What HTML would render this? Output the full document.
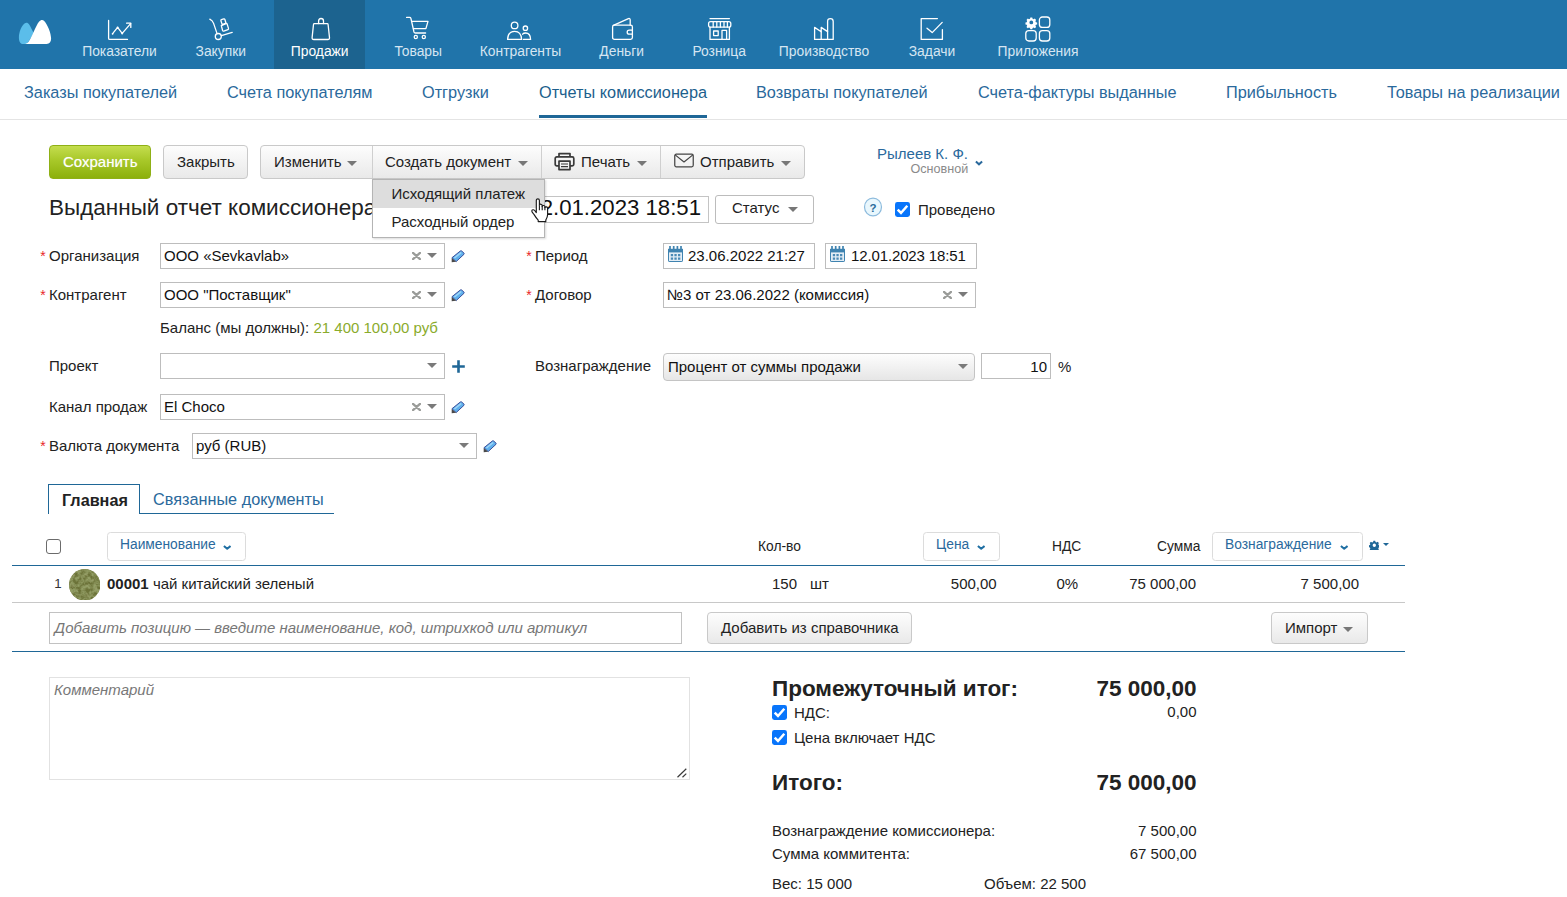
<!DOCTYPE html>
<html lang="ru">
<head>
<meta charset="utf-8">
<title>Выданный отчет комиссионера</title>
<style>
*{box-sizing:border-box;margin:0;padding:0}
html,body{width:1567px;height:897px;overflow:hidden;background:#fff}
body{font-family:"Liberation Sans",sans-serif;font-size:15px;color:#222;position:relative}
.abs{position:absolute;white-space:nowrap}
/* top nav */
#topnav{position:absolute;left:0;top:0;width:1567px;height:69px;background:#2074aa}
#topnav .active{position:absolute;left:274px;top:0;width:91px;height:69px;background:#1c638f}
.navlbl{position:absolute;top:42px;font-size:13.85px;line-height:18px;color:#d6e6f2;text-align:center;width:140px;margin-left:-70px;white-space:nowrap}
.navlbl.on{color:#fff}
.navico{position:absolute;top:14px;width:28px;height:28px;margin-left:-14px}
/* subnav */
#subnav{position:absolute;left:0;top:69px;width:1567px;height:51px;border-bottom:1px solid #e4e4e4;background:#fff}
.sub{position:absolute;top:13px;font-size:16.3px;line-height:20px;color:#2a699c;white-space:nowrap}
.sub.on{color:#1c5f8d}
#subul{position:absolute;left:539px;top:46px;width:168px;height:3px;background:#1f6797}
/* buttons */
.btn{position:absolute;height:34px;border:1px solid #c9c9c9;border-radius:4px;background:linear-gradient(#fdfdfd,#e9e9e9);font-size:15px;line-height:32px;color:#222;text-align:left;white-space:nowrap}
.caret{display:inline-block;width:0;height:0;border-left:5px solid transparent;border-right:5px solid transparent;border-top:5px solid #666;vertical-align:middle;margin-left:6px}
.lbl{position:absolute;font-size:15px;line-height:18px;color:#222;white-space:nowrap}
.req:before{content:"*";color:#e8262a;position:absolute;left:-8.8px;top:-0.5px;font-size:14px}
.inp{position:absolute;height:26px;border:1px solid #bdbdbd;background:#fff;font-size:15px;line-height:24px;padding-left:3px;color:#111;white-space:nowrap;overflow:hidden}
.x{position:absolute;top:0;font-size:15px;color:#888;font-weight:bold}
.tb{font-size:15px;line-height:18px;color:#222}
.vsep{top:146px;width:1px;height:32px;background:#cfcfcf}
.hbtn{position:absolute;height:29px;border:1px solid #dcdcdc;border-radius:3.5px;background:#fff}
.th{font-size:13.8px;line-height:17px;color:#222}
.th.blue{color:#2a699c}
.td{font-size:15px;line-height:18px;color:#222}
.r{text-align:right}
.big{font-size:22.5px;line-height:26px;font-weight:bold;color:#222}
.dd{position:absolute;width:0;height:0;border-left:5.5px solid transparent;border-right:5.5px solid transparent;border-top:5.5px solid #777;margin-top:1px}
</style>
</head>
<body>
<div id="topnav">
  <div class="active"></div>

  <svg class="abs" style="left:18px;top:19px" width="34" height="26" viewBox="0 0 34 26">
    <path d="M4.3 25 C1.8 24.5 0.9 21.5 0.9 18.5 C0.9 13 3.8 6.5 6.5 4.6 C8.2 3.3 9.8 3.6 11.2 5.5 C12.6 7.5 14 11 15.8 14 L9 25 Z" fill="#5bbdea"/>
    <path d="M7.2 25 C10.5 24.5 12.2 20.5 15.4 13.6 C17.5 9 19.5 4.5 21.2 2.6 C22.6 0.9 24.6 0.2 26.2 2 C29.5 5.6 33.1 14 33.1 19.6 C33.1 23 31.5 25 28.6 25 Z" fill="#fff"/>
  </svg>
  <!-- Показатели -->
  <svg class="abs" style="left:106px;top:18px" width="28" height="24" viewBox="0 0 28 24" fill="none" stroke="#fff" stroke-width="1.3" stroke-linecap="round" stroke-linejoin="round">
    <path d="M2.6 2.4 V20.2 Q2.6 21.4 3.8 21.4 H21.5"/>
    <path d="M6.6 15.6 L11.6 9.4 L16.2 15.4 L24.6 5.6"/>
    <path d="M20.6 5.2 L24.8 5.2 L24.8 9.4"/>
    <circle cx="6.6" cy="15.8" r="0.9" fill="#fff" stroke="none"/>
    <circle cx="16.2" cy="15.4" r="1" fill="#fff" stroke="none"/><circle cx="11.6" cy="9.6" r="1" fill="#fff" stroke="none"/>
  </svg>
  <div class="navlbl" style="left:119.5px">Показатели</div>
  <!-- Закупки -->
  <svg class="abs" style="left:208px;top:17px" width="26" height="25" viewBox="0 0 26 25" fill="none" stroke="#fff" stroke-width="1.3" stroke-linecap="round" stroke-linejoin="round">
    <path d="M1.8 2.2 Q4.6 3.6 5.6 6.4 L9 16.4"/>
    <circle cx="10.3" cy="19.5" r="3"/>
    <path d="M13.4 18.6 L24.2 15.4"/>
    <path d="M12.9 3.8 Q12.6 3 13.4 2.7 L15.8 1.9 Q16.6 1.7 16.9 2.5 L18 6.2 L14.2 7.6 Z"/>
    <path d="M13.3 8.7 L18 6.6 Q18.9 6.3 19.2 7.2 L20.5 11.4 Q20.8 12.3 19.9 12.6 L15.8 14.1 Q14.9 14.4 14.6 13.5 Z"/>
  </svg>
  <div class="navlbl" style="left:220.8px">Закупки</div>
  <!-- Продажи -->
  <svg class="abs" style="left:309px;top:16px" width="24" height="26" viewBox="0 0 24 26" fill="none" stroke="#fff" stroke-width="1.3" stroke-linecap="round" stroke-linejoin="round">
    <path d="M5.4 7.7 H18.2 Q19 7.7 19.1 8.5 L20.5 21.6 Q20.7 23.5 18.8 23.5 H4.8 Q2.9 23.5 3.1 21.6 L4.5 8.5 Q4.6 7.7 5.4 7.7Z"/>
    <path d="M9.6 7.5 V4.9 Q9.6 2.5 12 2.5 Q14.5 2.5 14.5 4.9 V7.5"/>
  </svg>
  <div class="navlbl on" style="left:319.7px">Продажи</div>
  <!-- Товары -->
  <svg class="abs" style="left:404px;top:15px" width="28" height="26" viewBox="0 0 28 26" fill="none" stroke="#fff" stroke-width="1.3" stroke-linecap="round" stroke-linejoin="round">
    <path d="M2.6 2.4 H5.6 Q6.6 2.4 6.9 3.4 L10 17 Q10.3 18 11.4 18 H21.6"/>
    <path d="M7.6 6.4 H24 L21.9 13.6 H9.4"/>
    <circle cx="11.8" cy="22" r="1.6"/>
    <circle cx="19.8" cy="22" r="1.6"/>
  </svg>
  <div class="navlbl" style="left:418.2px">Товары</div>
  <!-- Контрагенты -->
  <svg class="abs" style="left:505px;top:19px" width="29" height="23" viewBox="0 0 29 23" fill="none" stroke="#fff" stroke-width="1.3" stroke-linecap="round" stroke-linejoin="round">
    <circle cx="9.6" cy="6.4" r="3.3"/>
    <path d="M2.6 20.4 Q3 12.4 9.6 12.4 Q16.2 12.4 16.6 20.4 Z"/>
    <circle cx="20.4" cy="9.2" r="2.2"/>
    <path d="M18.4 20.4 H25.6 Q25.4 14 20.6 14 Q18.6 14 17.6 15.2"/>
  </svg>
  <div class="navlbl" style="left:520.5px">Контрагенты</div>
  <!-- Деньги -->
  <svg class="abs" style="left:610px;top:16px" width="26" height="26" viewBox="0 0 26 26" fill="none" stroke="#fff" stroke-width="1.3" stroke-linecap="round" stroke-linejoin="round">
    <path d="M4.4 9.2 H20.6 Q22.4 9.2 22.4 11 V21.6 Q22.4 23.4 20.6 23.4 H4.6 Q2.6 23.4 2.6 21.4 V11 Q2.6 9.2 4.4 9.2Z"/>
    <path d="M3.4 9.4 L18.4 2.6 Q20.2 2 20.2 4 V9.2"/>
    <path d="M22.4 14.2 H19.2 Q17.2 14.2 17.2 16.2 Q17.2 18.2 19.2 18.2 H22.4"/>
  </svg>
  <div class="navlbl" style="left:621.7px">Деньги</div>
  <!-- Розница -->
  <svg class="abs" style="left:706px;top:16px" width="28" height="26" viewBox="0 0 28 26" fill="none" stroke="#fff" stroke-width="1.3" stroke-linecap="round" stroke-linejoin="round">
    <path d="M4 2.6 H23.4"/>
    <path d="M4.6 5.6 H22.8 Q24.8 5.6 24.8 7.6 V9.2 Q24.8 11.2 22.8 11.2 H4.6 Q2.6 11.2 2.6 9.2 V7.6 Q2.6 5.6 4.6 5.6Z"/>
    <path d="M7.2 5.8 V11 M10.8 5.8 V11 M14.4 5.8 V11 M18 5.8 V11 M21.4 5.8 V11"/>
    <path d="M4 11.4 V23.4 H23.4 V11.4"/>
    <path d="M7.6 15 H12.2 V19.6 H7.6Z"/>
    <path d="M16 23.2 V14.4 H20.6 V23.2"/>
  </svg>
  <div class="navlbl" style="left:719.2px">Розница</div>
  <!-- Производство -->
  <svg class="abs" style="left:812px;top:16px" width="25" height="26" viewBox="0 0 25 26" fill="none" stroke="#fff" stroke-width="1.3" stroke-linecap="round" stroke-linejoin="round">
    <path d="M2.6 23.4 V11.4 L9.2 15.8 V11.4 L15.6 15.6 V5.4 Q15.6 2.6 18.4 2.6 Q21.2 2.6 21.2 5.4 V23.4 Z"/>
    <path d="M9.2 15.8 V23.2 M15.6 15.6 V23.2"/>
  </svg>
  <div class="navlbl" style="left:824px">Производство</div>
  <!-- Задачи -->
  <svg class="abs" style="left:918px;top:16px" width="28" height="26" viewBox="0 0 28 26" fill="none" stroke="#fff" stroke-width="1.3" stroke-linecap="round" stroke-linejoin="round">
    <path d="M24.4 13.6 V23.4 H3.2 V2.6 H19.4"/>
    <path d="M9 12.2 L14.2 16.6 L24.2 6.4"/>
  </svg>
  <div class="navlbl" style="left:932px">Задачи</div>
  <!-- Приложения -->
  <svg class="abs" style="left:1024px;top:15px" width="28" height="28" viewBox="0 0 28 28" fill="none" stroke="#fff" stroke-width="1.3" stroke-linecap="round" stroke-linejoin="round">
    <rect x="15.4" y="2" width="10.4" height="10.4" rx="3"/>
    <rect x="1.8" y="15.6" width="10.4" height="10.4" rx="3"/>
    <rect x="15.4" y="15.6" width="10.4" height="10.4" rx="3"/>
    <g transform="translate(7.3,7.4) scale(0.86)" stroke="none" fill="#fff">
      <path d="M-1.1 -5.6 h2.2 l.4 1.5 l1.2 .5 l1.4 -.8 l1.5 1.5 l-.8 1.4 l.5 1.2 l1.5 .4 v2.2 l-1.5 .4 l-.5 1.2 l.8 1.4 l-1.5 1.5 l-1.4 -.8 l-1.2 .5 l-.4 1.5 h-2.2 l-.4 -1.5 l-1.2 -.5 l-1.4 .8 l-1.5 -1.5 l.8 -1.4 l-.5 -1.2 l-1.5 -.4 v-2.2 l1.5 -.4 l.5 -1.2 l-.8 -1.4 l1.5 -1.5 l1.4 .8 l1.2 -.5z M0 -2.2 a2.2 2.2 0 1 0 0 4.4 a2.2 2.2 0 1 0 0 -4.4z" fill-rule="evenodd"/>
    </g>
  </svg>
  <div class="navlbl" style="left:1038px">Приложения</div>
</div>
<div id="subnav">
  <div class="sub" style="left:24px">Заказы покупателей</div>
  <div class="sub" style="left:227px">Счета покупателям</div>
  <div class="sub" style="left:422px">Отгрузки</div>
  <div class="sub on" style="left:539px">Отчеты комиссионера</div>
  <div class="sub" style="left:756px">Возвраты покупателей</div>
  <div class="sub" style="left:978px">Счета-фактуры выданные</div>
  <div class="sub" style="left:1226px">Прибыльность</div>
  <div class="sub" style="left:1387px">Товары на реализации</div>
  <div id="subul"></div>
</div>
<div id="main">
<!-- toolbar -->
<div class="btn" id="save" style="left:49px;top:145px;width:102px;border-color:#8fb016;background:linear-gradient(#c4dd4e 0%,#a8c829 45%,#8cb00c 100%);color:#fff;padding-left:13px;text-shadow:0 0 1px rgba(255,255,255,.5)">Сохранить</div>
<div class="btn" style="left:163px;top:145px;width:85px;padding-left:13px">Закрыть</div>
<div class="btn" style="left:260px;top:145px;width:545px;"></div>
<div class="abs tb" style="left:274px;top:153px">Изменить</div><div class="dd" style="left:347px;top:160px;border-top-color:#777"></div>
<div class="abs vsep" style="left:372px"></div>
<div class="abs tb" style="left:385px;top:153px">Создать документ</div><div class="dd" style="left:518px;top:160px;border-top-color:#777"></div>
<div class="abs vsep" style="left:541px"></div>
<svg class="abs" style="left:554px;top:151.6px" width="21" height="19.4" viewBox="0 0 21 19" fill="none" stroke="#3a3a3a" stroke-width="1.7" stroke-linejoin="round">
  <path d="M5 4.6 V1.4 H16 V4.6"/>
  <rect x="1.2" y="4.6" width="18.6" height="9" rx="1.6"/>
  <rect x="5" y="9" width="11" height="8.4" fill="#f3f3f3"/>
  <path d="M7 11.8 H14 M7 14.4 H14" stroke-width="1.2"/>
</svg>
<div class="abs tb" style="left:581px;top:153px">Печать</div><div class="dd" style="left:637px;top:160px;border-top-color:#777"></div>
<div class="abs vsep" style="left:660px"></div>
<svg class="abs" style="left:674px;top:153px" width="20" height="15" viewBox="0 0 21 15" fill="none" stroke="#444" stroke-width="1.3" stroke-linejoin="round">
  <rect x="0.8" y="0.8" width="19.4" height="13.4" rx="1.6"/>
  <path d="M1.2 1.6 L10.5 9 L19.8 1.6"/>
</svg>
<div class="abs tb" style="left:700px;top:153px">Отправить</div><div class="dd" style="left:781px;top:160px;border-top-color:#777"></div>

<div class="abs" style="left:877px;top:145px;font-size:15px;line-height:18px;color:#2a699c">Рылеев К. Ф.</div>
<div class="abs" style="left:910.5px;top:162px;font-size:12.6px;line-height:15px;color:#8a8a8a">Основной</div>
<svg class="abs" style="left:974px;top:158.5px" width="10" height="8" viewBox="0 0 10 8"><path d="M1.9 2.5 L5 5.3 L8.1 2.5" fill="none" stroke="#2a699c" stroke-width="2"/></svg>

<!-- title -->
<div class="abs" id="title" style="left:49px;top:194px;font-size:22.5px;line-height:28px;color:#222">Выданный отчет комиссионера №</div>
<div class="abs" style="left:536px;top:196px;width:173px;height:27px;border:1px solid #c4c4c4;background:#fff"></div>
<div class="abs" id="tdate" style="left:528.3px;top:194px;font-size:22.2px;line-height:28px;color:#111">12.01.2023 18:51</div>
<div class="abs" style="left:715px;top:195px;width:99px;height:28.5px;border:1px solid #bcbcbc;background:#fff;border-radius:3px"></div>
<div class="abs tb" style="left:732px;top:199px">Статус</div><div class="dd" style="left:788px;top:206px;border-top-color:#777"></div>
<svg class="abs" style="left:862.8px;top:197.1px" width="20" height="20" viewBox="0 0 20 20"><ellipse cx="10" cy="10" rx="8.5" ry="8.9" fill="#e9f7fd" stroke="#8dbbdd" stroke-width="1.2"/><text x="10" y="15" text-anchor="middle" font-family="Liberation Sans" font-weight="bold" font-size="11.5" fill="#2a6c9c">?</text></svg>
<svg class="abs" style="left:895px;top:202px" width="15" height="15" viewBox="0 0 15 15"><rect x="0" y="0" width="15" height="15" rx="2.4" fill="#0875fb"/><path d="M2.7 7.7 L6 11 L12.3 3.7" fill="none" stroke="#fff" stroke-width="2.5"/></svg>
<div class="abs tb" style="left:918px;top:201.4px">Проведено</div>

<!-- dropdown -->
<div class="abs" style="left:372px;top:179px;width:173px;height:59px;border:1px solid #b4b4b4;background:#fff;box-shadow:1px 1px 2px rgba(0,0,0,.15)"></div>
<div class="abs" style="left:373px;top:180px;width:171px;height:28px;background:#dddddd"></div>
<div class="abs tb" style="left:391.5px;top:185px">Исходящий платеж</div>
<div class="abs tb" style="left:391.5px;top:213px">Расходный ордер</div>
<svg class="abs" style="left:531px;top:198.4px" width="18" height="25" viewBox="0 0 18 25"><path d="M5.3 14.6 V2.4 C5.3 0.3 8.4 0.3 8.4 2.4 V7.2 C8.7 5.8 11.1 5.8 11.2 7.6 V8.4 C11.6 7 13.8 7.2 13.9 8.8 V9.6 C14.3 8.4 16.5 8.6 16.6 10.2 V16.6 C16.6 19.2 15.6 20.6 14.8 22 V23.6 H7.2 V22.2 C5.6 20.6 4.3 18.6 3.3 16.9 C2.5 15.5 0.8 14.3 0.8 13.1 C0.8 11.6 2.7 11.3 3.7 12.5 Z" fill="#fff" stroke="#1a1a1a" stroke-width="1.15" stroke-linejoin="round"/><path d="M8.4 7.2 V12.2 M11.2 7.8 V12.2 M13.9 9 V12.2" stroke="#1a1a1a" stroke-width="1.1" fill="none"/></svg>

<!-- form left -->
<div class="lbl req" style="left:49px;top:247px">Организация</div>
<div class="inp" style="left:160px;top:243px;width:285px">ООО «Sevkavlab»</div><svg class="abs" style="left:412px;top:252px" width="9" height="8" viewBox="0 0 9 8"><path d="M1 0.9 L8 7.1 M8 0.9 L1 7.1" stroke="#9a9c99" stroke-width="2.3" stroke-linecap="round" fill="none"/></svg><div class="dd" style="left:427px;top:252px;border-width:5px 5px 0 5px;border-top-color:#7a7a7a"></div><svg class="abs" style="left:450.6px;top:250.0px" width="15" height="13.3" viewBox="0 0 15 14" preserveAspectRatio="none"><path d="M9.4 1 Q10 0.5 10.6 1 L13 3.3 Q13.5 3.9 13 4.5 L5.2 12.2 L0.9 8.2z" fill="#5fb0ec" stroke="#3a4c98" stroke-width="1" stroke-linejoin="round"/><path d="M3.4 8.4 L10.2 2.6" stroke="#9fd6f8" stroke-width="1.6" fill="none"/><path d="M0.7 8.4 L0.7 12.8 L5.2 12.5z" fill="#4a4a4a"/></svg>
<div class="lbl req" style="left:49px;top:286px">Контрагент</div>
<div class="inp" style="left:160px;top:282px;width:285px">ООО "Поставщик"</div><svg class="abs" style="left:412px;top:291px" width="9" height="8" viewBox="0 0 9 8"><path d="M1 0.9 L8 7.1 M8 0.9 L1 7.1" stroke="#9a9c99" stroke-width="2.3" stroke-linecap="round" fill="none"/></svg><div class="dd" style="left:427px;top:291px;border-width:5px 5px 0 5px;border-top-color:#7a7a7a"></div><svg class="abs" style="left:450.6px;top:289.0px" width="15" height="13.3" viewBox="0 0 15 14" preserveAspectRatio="none"><path d="M9.4 1 Q10 0.5 10.6 1 L13 3.3 Q13.5 3.9 13 4.5 L5.2 12.2 L0.9 8.2z" fill="#5fb0ec" stroke="#3a4c98" stroke-width="1" stroke-linejoin="round"/><path d="M3.4 8.4 L10.2 2.6" stroke="#9fd6f8" stroke-width="1.6" fill="none"/><path d="M0.7 8.4 L0.7 12.8 L5.2 12.5z" fill="#4a4a4a"/></svg>
<div class="lbl" style="left:160px;top:319px">Баланс (мы должны): <span style="color:#8aab2c">21 400 100,00 руб</span></div>
<div class="lbl" style="left:49px;top:357px">Проект</div>
<div class="inp" style="left:160px;top:353px;width:285px"></div><div class="dd" style="left:427px;top:362px;border-width:5px 5px 0 5px;border-top-color:#7a7a7a"></div>
<svg class="abs" style="left:451px;top:359px" width="15" height="15" viewBox="0 0 15 15"><path d="M7.5 1.2 V13.8 M1.2 7.5 H13.8" stroke="#1f6797" stroke-width="2.6"/></svg>
<div class="lbl" style="left:49px;top:398px">Канал продаж</div>
<div class="inp" style="left:160px;top:394px;width:285px">El Choco</div><svg class="abs" style="left:412px;top:403px" width="9" height="8" viewBox="0 0 9 8"><path d="M1 0.9 L8 7.1 M8 0.9 L1 7.1" stroke="#9a9c99" stroke-width="2.3" stroke-linecap="round" fill="none"/></svg><div class="dd" style="left:427px;top:403px;border-width:5px 5px 0 5px;border-top-color:#7a7a7a"></div><svg class="abs" style="left:450.6px;top:401.0px" width="15" height="13.3" viewBox="0 0 15 14" preserveAspectRatio="none"><path d="M9.4 1 Q10 0.5 10.6 1 L13 3.3 Q13.5 3.9 13 4.5 L5.2 12.2 L0.9 8.2z" fill="#5fb0ec" stroke="#3a4c98" stroke-width="1" stroke-linejoin="round"/><path d="M3.4 8.4 L10.2 2.6" stroke="#9fd6f8" stroke-width="1.6" fill="none"/><path d="M0.7 8.4 L0.7 12.8 L5.2 12.5z" fill="#4a4a4a"/></svg>
<div class="lbl req" style="left:49px;top:437px">Валюта документа</div>
<div class="inp" style="left:192px;top:433px;width:285px">руб (RUB)</div><div class="dd" style="left:459px;top:442px;border-width:5px 5px 0 5px;border-top-color:#7a7a7a"></div><svg class="abs" style="left:482.6px;top:440.0px" width="15" height="13.3" viewBox="0 0 15 14" preserveAspectRatio="none"><path d="M9.4 1 Q10 0.5 10.6 1 L13 3.3 Q13.5 3.9 13 4.5 L5.2 12.2 L0.9 8.2z" fill="#5fb0ec" stroke="#3a4c98" stroke-width="1" stroke-linejoin="round"/><path d="M3.4 8.4 L10.2 2.6" stroke="#9fd6f8" stroke-width="1.6" fill="none"/><path d="M0.7 8.4 L0.7 12.8 L5.2 12.5z" fill="#4a4a4a"/></svg>

<!-- form right -->
<div class="lbl req" style="left:535px;top:247px">Период</div>
<div class="inp" style="left:663px;top:243px;width:152px;padding-left:24px">23.06.2022 21:27</div><svg class="abs" style="left:668px;top:246px" width="15" height="16" viewBox="0 0 15 16"><rect x="0.5" y="3.5" width="14" height="12" rx="0.6" fill="#e3edf5" stroke="#3f83b0" stroke-width="1"/><rect x="0" y="2.8" width="15" height="3.6" fill="#3f83b0"/><path d="M2 0v4M5.7 0v4M9.4 0v4M13 0v4" stroke="#3f83b0" stroke-width="1.7"/><path d="M2.8 8h2.3v2.2h-2.3zM6.4 8h2.3v2.2h-2.3zM10 8h2.3v2.2h-2.3zM2.8 11.5h2.3v2.2h-2.3zM6.4 11.5h2.3v2.2h-2.3zM10 11.5h2.3v2.2h-2.3z" fill="#4b8ab5"/></svg>
<div class="inp" style="left:825px;top:243px;width:152px;padding-left:25px;letter-spacing:-0.13px">12.01.2023 18:51</div><svg class="abs" style="left:830px;top:246px" width="15" height="16" viewBox="0 0 15 16"><rect x="0.5" y="3.5" width="14" height="12" rx="0.6" fill="#e3edf5" stroke="#3f83b0" stroke-width="1"/><rect x="0" y="2.8" width="15" height="3.6" fill="#3f83b0"/><path d="M2 0v4M5.7 0v4M9.4 0v4M13 0v4" stroke="#3f83b0" stroke-width="1.7"/><path d="M2.8 8h2.3v2.2h-2.3zM6.4 8h2.3v2.2h-2.3zM10 8h2.3v2.2h-2.3zM2.8 11.5h2.3v2.2h-2.3zM6.4 11.5h2.3v2.2h-2.3zM10 11.5h2.3v2.2h-2.3z" fill="#4b8ab5"/></svg>
<div class="lbl req" style="left:535px;top:286px">Договор</div>
<div class="inp" style="left:663px;top:282px;width:313px">№3 от 23.06.2022 (комиссия)</div><svg class="abs" style="left:943px;top:291px" width="9" height="8" viewBox="0 0 9 8"><path d="M1 0.9 L8 7.1 M8 0.9 L1 7.1" stroke="#9a9c99" stroke-width="2.3" stroke-linecap="round" fill="none"/></svg><div class="dd" style="left:958px;top:291px;border-width:5px 5px 0 5px;border-top-color:#7a7a7a"></div>
<div class="lbl" style="left:535px;top:357px">Вознаграждение</div>
<div class="inp" style="left:663px;top:353px;width:312px;height:28px;border-radius:4px;border-color:#c4c4c4;background:linear-gradient(#fdfdfd,#e6e6e6);padding-left:4px;line-height:26px">Процент от суммы продажи</div><div class="dd" style="left:958px;top:363px;border-width:5px 5px 0 5px;border-top-color:#7a7a7a"></div>
<div class="inp" style="left:981px;top:353px;width:70px;text-align:right;padding-right:3px;padding-top:1px">10</div>
<div class="lbl" style="left:1058px;top:358px">%</div>

<!-- tabs -->
<div class="abs" style="left:139px;top:513px;width:195px;height:1px;background:#1f6797"></div>
<div class="abs" style="left:48px;top:484px;width:92px;height:30px;border:1px solid #1f6797;border-bottom:none;background:#fff"></div>
<div class="abs" id="tab1" style="left:62px;top:491px;font-size:16.2px;line-height:19px;font-weight:bold;color:#222">Главная</div>
<div class="abs" id="tab2" style="left:153px;top:490px;font-size:16.25px;line-height:19px;color:#2a699c">Связанные документы</div>

<!-- table head -->
<div class="abs" style="left:45.6px;top:538.8px;width:15px;height:15px;border:1.4px solid #6b6b6b;border-radius:3px;background:#fff"></div>
<div class="hbtn" style="left:107px;top:532px;width:139px"></div>
<div class="abs th blue" style="left:120px;top:536px">Наименование</div><svg class="abs" style="left:222.8px;top:545.3px" width="8.4" height="5" viewBox="0 0 8.4 5"><path d="M0.9 1 L4.2 3.8 L7.5 1" fill="none" stroke="#1f6fa3" stroke-width="2" stroke-linejoin="round"/></svg>
<div class="abs th" style="left:758px;top:538px">Кол-во</div>
<div class="hbtn" style="left:923px;top:532px;width:77px"></div>
<div class="abs th blue" style="left:936px;top:536px">Цена</div><svg class="abs" style="left:976.8px;top:545.3px" width="8.4" height="5" viewBox="0 0 8.4 5"><path d="M0.9 1 L4.2 3.8 L7.5 1" fill="none" stroke="#1f6fa3" stroke-width="2" stroke-linejoin="round"/></svg>
<div class="abs th" style="left:1052px;top:538px">НДС</div>
<div class="abs th" style="left:1157px;top:538px">Сумма</div>
<div class="hbtn" style="left:1212px;top:532px;width:151px"></div>
<div class="abs th blue" style="left:1225px;top:536px">Вознаграждение</div><svg class="abs" style="left:1339.8px;top:545.3px" width="8.4" height="5" viewBox="0 0 8.4 5"><path d="M0.9 1 L4.2 3.8 L7.5 1" fill="none" stroke="#1f6fa3" stroke-width="2" stroke-linejoin="round"/></svg>
<svg class="abs" style="left:1368.6px;top:539.6px" width="10.6" height="10.6" viewBox="-6 -6 12 12"><path d="M-1 -5.2 h2 l.4 1.4 l1.1 .5 l1.3 -.7 l1.4 1.4 l-.7 1.3 l.5 1.1 l1.4 .4 v2 l-1.4 .4 l-.5 1.1 l.7 1.3 l-1.4 1.4 l-1.3 -.7 l-1.1 .5 l-.4 1.4 h-2 l-.4 -1.4 l-1.1 -.5 l-1.3 .7 l-1.4 -1.4 l.7 -1.3 l-.5 -1.1 l-1.4 -.4 v-2 l1.4 -.4 l.5 -1.1 l-.7 -1.3 l1.4 -1.4 l1.3 .7 l1.1 -.5z M0 -1.9 a1.9 1.9 0 1 0 0 3.8 a1.9 1.9 0 1 0 0 -3.8z" fill="#1f6797" fill-rule="evenodd"/></svg>
<div class="dd" style="left:1382.6px;top:541.8px;border-width:3.6px 3.6px 0 3.6px;border-top-color:#1f6797"></div>
<div class="abs" style="left:12px;top:565px;width:1393px;height:1px;background:#1f6797"></div>

<!-- row -->
<div class="abs td" style="left:54.2px;top:575px;font-size:13.3px;color:#333">1</div>
<svg class="abs" id="tea" style="left:68.7px;top:568.7px" width="31.4" height="31.6" viewBox="0 0 32 32">
<defs>
<filter id="tl" x="0" y="0" width="1" height="1"><feTurbulence type="fractalNoise" baseFrequency="0.2" numOctaves="3" seed="7"/><feColorMatrix type="matrix" values="0 0 0 0 0.57  0 0 0 0 0.59  0 0 0 0 0.33  2.4 0 0 0 -1.3"/></filter>
<filter id="td" x="0" y="0" width="1" height="1"><feTurbulence type="fractalNoise" baseFrequency="0.24" numOctaves="3" seed="21"/><feColorMatrix type="matrix" values="0 0 0 0 0.29  0 0 0 0 0.34  0 0 0 0 0.13  0 2.8 0 0 -0.95"/></filter>
<clipPath id="tc"><circle cx="16" cy="16" r="15.9"/></clipPath>
</defs>
<circle cx="16" cy="16" r="16" fill="#6b7238"/>
<g clip-path="url(#tc)"><rect width="32" height="32" filter="url(#tl)"/><rect width="32" height="32" filter="url(#td)"/></g>
</svg>
<div class="abs td" style="left:107px;top:575px"><b>00001</b> чай китайский зеленый</div>
<div class="abs td" style="left:772px;top:575px">150</div>
<div class="abs td" style="left:810px;top:575px">шт</div>
<div class="abs td r" style="right:570.3px;top:575px">500,00</div>
<div class="abs td" style="left:1056.5px;top:575px">0%</div>
<div class="abs td r" style="right:371px;top:575px">75 000,00</div>
<div class="abs td r" style="right:208px;top:575px">7 500,00</div>
<div class="abs" style="left:12px;top:602px;width:1393px;height:1px;background:#c8c8c8"></div>

<!-- add row -->
<div class="abs" style="left:49px;top:612px;width:633px;height:32px;border:1px solid #c2c2c2;background:#fff"></div>
<div class="abs" id="ph1" style="left:54.6px;top:619px;font-size:15px;line-height:18px;font-style:italic;color:#777">Добавить позицию — введите наименование, код, штрихкод или артикул</div>
<div class="btn" style="left:707px;top:612px;width:205px;height:32px;padding-left:13px;line-height:30px">Добавить из справочника</div>
<div class="btn" style="left:1271px;top:612px;width:97px;height:32px;padding-left:13px;line-height:30px">Импорт</div><div class="dd" style="left:1343px;top:626px;border-top-color:#777"></div>
<div class="abs" style="left:12px;top:651px;width:1393px;height:1px;background:#1f6797"></div>

<!-- comment -->
<div class="abs" style="left:49px;top:677px;width:641px;height:103px;border:1px solid #e2e2e2;background:#fff"></div>
<div class="abs" id="ph2" style="left:54px;top:681px;font-size:15px;line-height:18px;font-style:italic;color:#787878">Комментарий</div>
<svg class="abs" style="left:676px;top:767px" width="12" height="12" viewBox="0 0 12 12"><path d="M1.5 10.2 L10.3 1.8 M6.5 10.2 L10.3 6.6" stroke="#3a3a3a" stroke-width="1.2" fill="none"/></svg>

<!-- totals -->
<div class="abs big" style="left:772px;top:676px">Промежуточный итог:</div>
<div class="abs big r" style="right:370.5px;top:676px">75 000,00</div>
<svg class="abs" style="left:772px;top:705px" width="15" height="15" viewBox="0 0 15 15"><rect x="0" y="0" width="15" height="15" rx="2.4" fill="#0875fb"/><path d="M2.7 7.7 L6 11 L12.3 3.7" fill="none" stroke="#fff" stroke-width="2.5"/></svg>
<div class="abs tb" style="left:794px;top:704px">НДС:</div>
<div class="abs tb r" style="right:370.5px;top:703px">0,00</div>
<svg class="abs" style="left:772px;top:730px" width="15" height="15" viewBox="0 0 15 15"><rect x="0" y="0" width="15" height="15" rx="2.4" fill="#0875fb"/><path d="M2.7 7.7 L6 11 L12.3 3.7" fill="none" stroke="#fff" stroke-width="2.5"/></svg>
<div class="abs tb" style="left:794px;top:729px">Цена включает НДС</div>
<div class="abs big" style="left:772px;top:770px">Итого:</div>
<div class="abs big r" style="right:370.5px;top:770px">75 000,00</div>
<div class="abs tb" style="left:772px;top:822px">Вознаграждение комиссионера:</div>
<div class="abs tb r" style="right:370.5px;top:822px">7 500,00</div>
<div class="abs tb" style="left:772px;top:845px">Сумма коммитента:</div>
<div class="abs tb r" style="right:370.5px;top:845px">67 500,00</div>
<div class="abs tb" style="left:772px;top:875px">Вес: 15 000</div>
<div class="abs tb" style="left:984px;top:875px">Объем: 22 500</div>
</div>
</body>
</html>
